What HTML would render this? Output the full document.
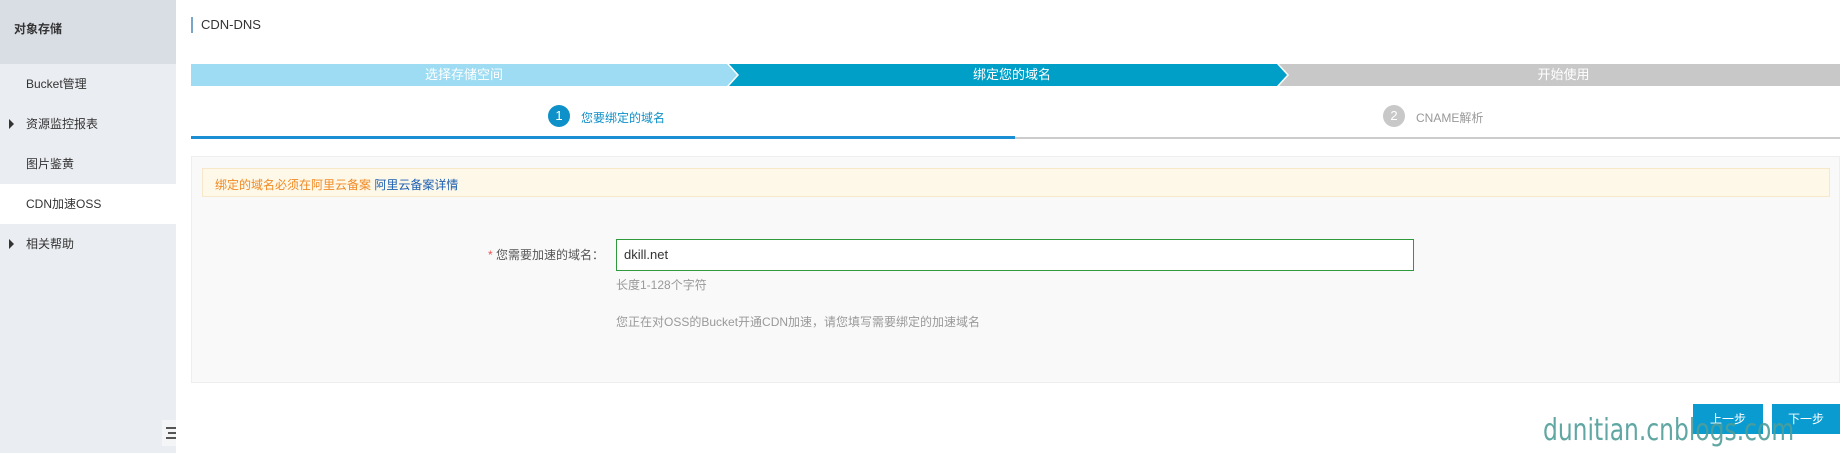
<!DOCTYPE html>
<html><head><meta charset="utf-8"><style>
*{margin:0;padding:0;box-sizing:border-box}
body{width:1840px;height:453px;overflow:hidden;background:#fff;font-family:"Liberation Sans","Noto Sans CJK SC",sans-serif;font-size:12px;color:#333;position:relative}
.abs{position:absolute}
#side{left:0;top:0;width:176px;height:453px;background:#eaedf1}
#side .top{position:absolute;left:0;top:0;width:176px;height:64px;background:#d9dee4}
#side .title{position:absolute;left:14px;top:20px;font-size:12px;color:#333;font-weight:bold}
.item{position:absolute;left:0;width:176px;height:40px;line-height:40px;padding-left:26px;font-size:12px;color:#333}
.item.act{background:#fff}
.tri{position:absolute;left:9px;top:15px;width:0;height:0;border-top:5px solid transparent;border-bottom:5px solid transparent;border-left:5px solid #333}
.seg{position:absolute;top:64px;height:22px;line-height:22px;color:#fff;text-align:center;font-size:13px}
.circ{position:absolute;width:22px;height:22px;border-radius:11px;color:#fff;text-align:center;line-height:22px;font-size:13px}
.btn{position:absolute;top:404px;height:30px;line-height:30px;background:#0a9bd1;color:#fff;text-align:center;font-size:12px}
</style></head><body>
<div id="side" class="abs">
 <div class="top"></div>
 <div class="title">对象存储</div>
 <div class="item" style="top:64px">Bucket管理</div>
 <div class="item" style="top:104px"><span class="tri"></span>资源监控报表</div>
 <div class="item" style="top:144px">图片鉴黄</div>
 <div class="item act" style="top:184px">CDN加速OSS</div>
 <div class="item" style="top:224px"><span class="tri"></span>相关帮助</div>
 <div class="abs" style="left:162px;top:420px;width:14px;height:26px;background:#f4f5f7"></div>
 <div class="abs" style="left:166px;top:427px;width:10px;height:2px;background:#555"></div>
 <div class="abs" style="left:168px;top:432px;width:8px;height:2px;background:#555"></div>
 <div class="abs" style="left:166px;top:437px;width:10px;height:2px;background:#555"></div>
</div>
<div class="abs" style="left:191px;top:17px;width:2px;height:16px;background:#7aa7c9"></div>
<div class="abs" style="left:201px;top:17px;font-size:13px;color:#333;line-height:16px">CDN-DNS</div>

<svg class="abs" style="left:191px;top:64px" width="1649" height="22">
 <polygon points="0,0 536,0 546,11 536,22 0,22" fill="#9ddcf2"/>
 <polygon points="538,0 1086,0 1096,11 1086,22 538,22 548,11" fill="#009fc8"/>
 <polygon points="1088,0 1649,0 1649,22 1088,22 1098,11" fill="#c8c8c8"/>
</svg>
<div class="seg" style="left:191px;width:546px">选择存储空间</div>
<div class="seg" style="left:737px;width:550px">绑定您的域名</div>
<div class="seg" style="left:1287px;width:553px">开始使用</div>

<div class="circ" style="left:548px;top:105px;background:#0e90c8">1</div>
<div class="abs" style="left:581px;top:109px;color:#0e90c8;font-size:12px">您要绑定的域名</div>
<div class="circ" style="left:1383px;top:105px;background:#c8c8c8">2</div>
<div class="abs" style="left:1416px;top:109px;color:#999;font-size:12px">CNAME解析</div>
<div class="abs" style="left:191px;top:136px;width:824px;height:3px;background:#1a8fd4"></div>
<div class="abs" style="left:1015px;top:137px;width:825px;height:2px;background:#ccc"></div>

<div class="abs" style="left:191px;top:156px;width:1649px;height:227px;background:#f9f9f9;border:1px solid #eee"></div>
<div class="abs" style="left:202px;top:168px;width:1628px;height:29px;background:#fef8e8;border:1px solid #f6e8c8"></div>
<div class="abs" style="left:215px;top:176px;font-size:12px;color:#f08a24">绑定的域名必须在阿里云备案 <span style="color:#1a5fb4">阿里云备案详情</span></div>

<div class="abs" style="left:404px;top:246px;width:200px;text-align:right;font-size:12px;color:#555"><span style="color:#e55">*</span> 您需要加速的域名：</div>
<div class="abs" style="left:616px;top:239px;width:798px;height:32px;border:1px solid #2f9a3c;background:#fff;padding-left:7px;line-height:30px;font-size:13px;color:#333">dkill.net</div>
<div class="abs" style="left:616px;top:276px;font-size:12px;color:#999">长度1-128个字符</div>
<div class="abs" style="left:616px;top:313px;font-size:12px;color:#999">您正在对OSS的Bucket开通CDN加速，请您填写需要绑定的加速域名</div>

<div class="btn" style="left:1693px;width:70px">上一步</div>
<div class="btn" style="left:1772px;width:68px">下一步</div>
<div class="abs" style="left:1543px;top:412px;font-family:'DejaVu Sans',sans-serif;font-size:30px;color:#4f9e9a;opacity:.9;line-height:38px;white-space:nowrap;transform:scaleX(0.78);transform-origin:0 0">dunitian.cnblogs.com</div>
</body></html>
